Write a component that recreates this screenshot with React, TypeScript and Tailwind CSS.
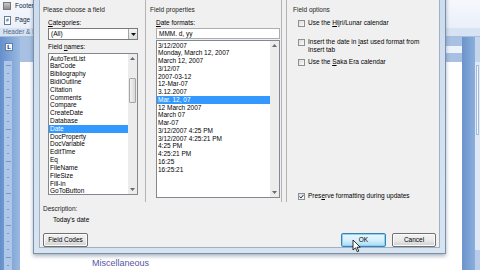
import React from "react";

const fields = [
  "AutoTextList", "BarCode", "Bibliography", "BidiOutline", "Citation", "Comments", "Compare",
  "CreateDate", "Database", "Date", "DocProperty", "DocVariable", "EditTime", "Eq", "FileName",
  "FileSize", "Fill-in", "GoToButton",
];
const formats = [
  "3/12/2007", "Monday, March 12, 2007", "March 12, 2007", "3/12/07", "2007-03-12", "12-Mar-07",
  "3.12.2007", "Mar. 12, 07", "12 March 2007", "March 07", "Mar-07", "3/12/2007 4:25 PM",
  "3/12/2007 4:25:21 PM", "4:25 PM", "4:25:21 PM", "16:25", "16:25:21",
];

function Arrow({ dir }: { dir: "up" | "down" }) {
  return (
    <div className="h-[9px] flex items-center justify-center">
      <svg width="5" height="3" viewBox="0 0 5 3">
        {dir === "up" ? <path d="M0 3 L2.5 0 L5 3Z" fill="#6a6a6a" /> : <path d="M0 0 L2.5 3 L5 0Z" fill="#6a6a6a" />}
      </svg>
    </div>
  );
}

function ScrollBar({ thumbTop, thumbH }: { thumbTop?: number; thumbH?: number }) {
  return (
    <div className="w-[9px] h-full bg-[#ececec] flex flex-col">
      <Arrow dir="up" />
      {thumbTop !== undefined && (
        <>
          <div style={{ height: thumbTop }} />
          <div
            className="mx-[1px] rounded-[1px] border border-[#a5a5a5] bg-gradient-to-r from-[#f3f3f3] to-[#d8d8d8]"
            style={{ height: thumbH }}
          />
        </>
      )}
      <div className="flex-1" />
      <Arrow dir="down" />
    </div>
  );
}

function Check({ checked }: { checked?: boolean }) {
  return (
    <div className="w-[7px] h-[7px] border border-[#8e8f8f] bg-gradient-to-br from-[#dcdcdc] to-[#fbfbfb] flex items-center justify-center shrink-0">
      {checked && (
        <svg width="5" height="5" viewBox="0 0 5 5">
          <path d="M0.5 2.5 L2 4 L4.5 0.8" stroke="#1f3d6a" strokeWidth="1" fill="none" />
        </svg>
      )}
    </div>
  );
}

function Btn({ children, focused, w }: { children: React.ReactNode; focused?: boolean; w: string }) {
  return (
    <div
      className={
        "h-[14px] rounded-[2px] border flex items-center justify-center text-[6.5px] text-black " +
        w +
        " " +
        (focused
          ? "border-[#3c7fb1] bg-gradient-to-b from-[#eaf6fd] via-[#d9f0fc] to-[#a7d9f5] shadow-[inset_0_0_0_1px_#8ad3f5]"
          : "border-[#707070] bg-gradient-to-b from-[#f2f2f2] via-[#ebebeb] to-[#cfcfcf] shadow-[inset_0_0_0_1px_#fcfcfc]")
      }
    >
      {children}
    </div>
  );
}

function Dialog() {
  return (
    <div className="absolute left-[33px] top-[-7px] w-[413px] h-[261px] border border-[#7890ad] bg-gradient-to-b from-[#cddcee] to-[#d8e4f0] p-[5px] shadow-[0_2px_4px_rgba(40,60,90,0.4)]">
      <div className="w-full h-full border border-[#9fb1c7] bg-[#f0f0f0] flex flex-col text-[6.5px] text-black">
        <div className="flex h-[226px]">
          {/* column 1 */}
          <div className="w-[105px] flex flex-col pt-[6px]">
            <div className="h-[8px] leading-[8px] pl-[3px] text-[#1e1e1e]">Please choose a field</div>
            <div className="h-[8px] leading-[8px] mt-[5px] pl-[8px]">
              <span className="underline">C</span>ategories:
            </div>
            <div className="mt-[1px] ml-[8px] w-[90px] h-[12px] border border-[#7a7a7a] bg-white flex items-center">
              <div className="flex-1 pl-[2px] leading-[8px]">(All)</div>
              <div className="w-[9px] h-full border-l border-[#9aa] bg-gradient-to-b from-[#f4f4f4] to-[#dcdcdc] flex items-center justify-center">
                <svg width="5" height="3" viewBox="0 0 5 3"><path d="M0 0 L2.5 3 L5 0Z" fill="#111" /></svg>
              </div>
            </div>
            <div className="h-[8px] leading-[8px] mt-[3px] pl-[8px]">
              Field <span className="underline">n</span>ames:
            </div>
            <div className="mt-[2px] ml-[8px] w-[90px] h-[142px] border border-[#828790] bg-white flex">
              <div className="flex-1 pt-[0.5px] overflow-hidden">
                {fields.map((f) => (
                  <div
                    key={f}
                    className={
                      "h-[7.82px] leading-[7.82px] pl-[1px] whitespace-nowrap " +
                      (f === "Date" ? "bg-[#3399ff] text-white" : "")
                    }
                  >
                    {f}
                  </div>
                ))}
              </div>
              <ScrollBar thumbTop={15} thumbH={25} />
            </div>
            <div className="h-[8px] leading-[8px] mt-[10px] pl-[3px] text-[#1e1e1e]">Description:</div>
            <div className="h-[8px] leading-[8px] mt-[3px] pl-[13px]">Today's date</div>
          </div>

          {/* column 2 */}
          <div className="w-[137px] h-[202px] border-l border-r border-[#b4b4b4] flex flex-col pt-[6px] pl-[4px]">
            <div className="h-[8px] leading-[8px] text-[#1e1e1e]">Field properties</div>
            <div className="h-[8px] leading-[8px] mt-[5px] pl-[6px]">
              <span className="underline">D</span>ate formats:
            </div>
            <div className="mt-[1px] ml-[6px] w-[124px] h-[11px] border border-[#abadb3] bg-white pl-[2px] leading-[9px]">
              MMM. d, yy
            </div>
            <div className="mt-[1px] ml-[6px] w-[124px] h-[158px] border border-[#828790] bg-white flex">
              <div className="flex-1 pt-[0.5px] overflow-hidden">
                {formats.map((f) => (
                  <div
                    key={f}
                    className={
                      "h-[7.75px] leading-[7.75px] pl-[1px] whitespace-nowrap " +
                      (f === "Mar. 12, 07" ? "bg-[#3399ff] text-white" : "")
                    }
                  >
                    {f}
                  </div>
                ))}
              </div>
              <ScrollBar />
            </div>
          </div>

          {/* column 3 */}
          <div className="ml-[4px] flex-1 h-[202px] border-l border-[#b4b4b4] flex flex-col pt-[6px] pl-[6px]">
            <div className="h-[8px] leading-[8px] text-[#1e1e1e]">Field options</div>
            <div className="mt-[5px] ml-[5px] flex items-center gap-[3px] h-[8px]">
              <Check />
              <span className="leading-[8px]">
                Use the <span className="underline">H</span>ijri/Lunar calendar
              </span>
            </div>
            <div className="mt-[11px] ml-[5px] flex items-start gap-[3px]">
              <div className="mt-[0.5px]">
                <Check />
              </div>
              <span className="leading-[7.5px]">
                Insert the date in <span className="underline">l</span>ast used format from
                <br />
                Insert tab
              </span>
            </div>
            <div className="mt-[5px] ml-[5px] flex items-center gap-[3px] h-[8px]">
              <Check />
              <span className="leading-[8px]">
                Use the <span className="underline">S</span>aka Era calendar
              </span>
            </div>
            <div className="flex-1" />
            <div className="mb-[2px] ml-[5px] flex items-center gap-[3px] h-[8px]">
              <Check checked />
              <span className="leading-[8px]">
                Pres<span className="underline">e</span>rve formatting during updates
              </span>
            </div>
          </div>
        </div>

        {/* buttons */}
        <div className="mt-[7px] flex items-center px-[3px]">
          <Btn w="w-[45px]">Field Codes</Btn>
          <div className="flex-1" />
          <Btn w="w-[45px]" focused>
            OK
          </Btn>
          <div className="w-[6px]" />
          <Btn w="w-[44px]">Cancel</Btn>
        </div>
      </div>
    </div>
  );
}

function Cursor() {
  return (
    <svg className="absolute left-[352px] top-[239px]" width="9" height="14" viewBox="0 0 9 14">
      <path d="M1 1 L1 11 L3.5 8.8 L5.3 12.8 L6.8 12.1 L5 8.2 L8.2 8.2 Z" fill="#fff" stroke="#000" strokeWidth="0.8" />
    </svg>
  );
}

export default function App() {
  return (
    <div className="relative w-[480px] h-[270px] overflow-hidden bg-white font-['Liberation_Sans',Arial,sans-serif]">
      {/* Word background */}
      <div className="flex flex-col w-full h-full">
        {/* ribbon */}
        <div className="h-[37px] bg-gradient-to-b from-[#f6f8fc] to-[#e6eef8] border-b border-[#a9bfd9] flex flex-col text-[6.5px] text-[#15283f]">
          <div className="flex items-center gap-[4px] pl-[3px] h-[10px] mt-[1px]">
            <div className="w-[8px] h-[8px] bg-gradient-to-b from-[#c9c9c9] to-[#8d8d8d] border border-[#777]" />
            <span>Footer</span>
          </div>
          <div className="flex items-center gap-[4px] pl-[4px] h-[10px] mt-[4px]">
            <div className="w-[7px] h-[9px] bg-white border border-[#6c7c90] flex items-center justify-center text-[5px] leading-[5px] text-[#2a5aa0]">
              #
            </div>
            <span>Page</span>
          </div>
          <div className="flex-1" />
          <div className="h-[8px] leading-[8px] bg-[#d7e3f3] pl-[3px] text-[#4d6385]">Header &amp; Footer</div>
        </div>
        <div className="flex flex-1">
          {/* left blue w/ vertical ruler */}
          <div className="w-[28px] bg-gradient-to-r from-[#658fcb] to-[#9ab9e1] flex flex-col items-start pt-[6px]">
            <div className="ml-[5px] w-[8px] h-[8px] bg-[#f4f7fb] border border-[#5a7fb0] flex items-center justify-center text-[6px] leading-[6px] font-bold text-[#223]">
              L
            </div>
            <div className="ml-[4px] mt-[10px] w-[8px] flex-1 bg-[#aec7e8] flex flex-col items-center gap-[7px] pt-[4px]">
              {Array.from({ length: 26 }).map((_, i) => (
                <div key={i} className={"h-[1px] bg-[#7896c2] " + (i % 4 === 0 ? "w-[5px]" : "w-[2px]")} />
              ))}
            </div>
          </div>
          {/* page column */}
          <div className="flex-1 flex flex-col">
            <div className="h-[25px] bg-[#a8c1e2] flex items-center">
              <div className="ml-[425px] w-[17px] h-[7px] bg-[#eef3fa]" />
            </div>
            <div className="flex-1 bg-white flex flex-col justify-end pb-[2px] pl-[72px]">
              <div className="text-[9px] leading-[10px] text-[#5656a6]">Miscellaneous</div>
            </div>
          </div>
          <div className="w-[18px] bg-gradient-to-r from-[#6c93cb] to-[#8aaedd]" />
          <div className="w-[7px] bg-[#dfe8f4] flex flex-col">
            <div className="h-[25px] bg-[#c5d6ec]" />
            <div className="mt-[3px] h-[70px] mx-[1px] bg-[#f4f7fc] border border-[#a7bcd8]" />
            <div className="flex-1" />
            <div className="h-[20px] bg-[#b9cde8]" />
          </div>
        </div>
      </div>
      <Dialog />
      <Cursor />
    </div>
  );
}
